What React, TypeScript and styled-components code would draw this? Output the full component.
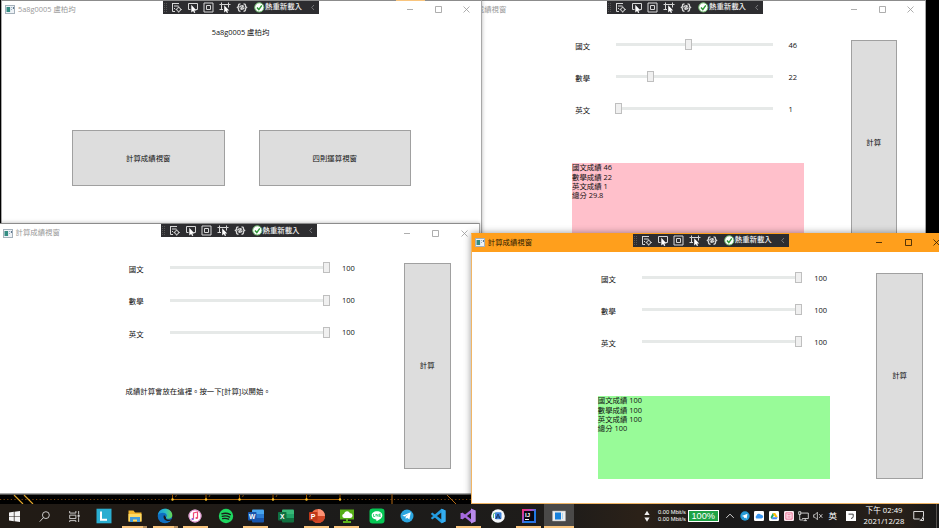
import React from "react";
import styled, { createGlobalStyle, css } from "styled-components";

const GlobalStyle = createGlobalStyle`
  * { box-sizing: border-box; }
  body { margin: 0; overflow: hidden; }
`;

const Desktop = styled.div`
  width: 939px;
  height: 528px;
  display: grid;
  grid-template-rows: 504px 24px;
  overflow: hidden;
  background: #000;
  color: #111;
  font: 7.4px/9.3px "Open Sans", "Noto Sans CJK TC", sans-serif;
  white-space: nowrap;
`;

const Workspace = styled.div`
  position: relative;
  overflow: hidden;
`;

const Wallpaper = styled.svg`
  position: absolute;
  left: 0;
  top: 494px;
  display: block;
`;

const Frame = styled.section<{ $x: number; $y: number; $active?: boolean }>`
  position: absolute;
  left: ${(p) => p.$x}px;
  top: ${(p) => p.$y}px;
  width: 481px;
  height: 271px;
  display: flex;
  flex-direction: column;
  background: #fff;
  border: 1px solid ${(p) => (p.$active ? "#f0b565" : "#a8a8a8")};
  border-top-color: ${(p) => (p.$active ? "#ff9f1c" : "#8c8c8c")};
  box-shadow: 0 0 ${(p) => (p.$active ? "7px rgba(0,0,0,.42)" : "4px rgba(0,0,0,.3)")};
`;

const TitleBar = styled.header<{ $active?: boolean }>`
  position: relative;
  flex: none;
  height: 17.5px;
  display: flex;
  align-items: center;
  padding-left: 3px;
  background: ${(p) => (p.$active ? "#ff9f1c" : "#fff")};
  color: ${(p) => (p.$active ? "#2b1a02" : "#999")};
`;

const Title = styled.span`
  margin-left: 3px;
  flex: 1;
`;

const WindowButtons = styled.div`
  display: flex;
`;

const WindowButton = styled.span`
  width: 28.4px;
  height: 17px;
  display: flex;
  align-items: center;
  justify-content: center;
`;

const DebugBar = styled.div`
  position: absolute;
  left: 161px;
  top: 0;
  width: 156px;
  height: 12.5px;
  display: flex;
  align-items: center;
  background: #2d2d30;
  color: #f3f3f3;
  font-weight: 500;
`;

const FormBody = styled.div`
  flex: 1;
  display: grid;
  grid-template-columns: 126px 232px 46.5px 46.5px;
`;

const FormColumn = styled.div`
  grid-column: 2;
  display: flex;
  flex-direction: column;
  padding-top: 10px;
`;

const SliderRow = styled.div`
  height: 32.2px;
  display: grid;
  grid-template-columns: 44px 160px 1fr;
  align-items: center;
`;

const FieldLabel = styled.label`
  padding: 4px 0 0 3.3px;
`;

const Rail = styled.div`
  display: flex;
  align-items: center;
  height: 11px;
  background: linear-gradient(#e6e9e8, #e6e9e8) 0 4px / 157px 3px no-repeat;
`;

const Thumb = styled.i`
  width: 7px;
  height: 11px;
  background: #f0f0f0;
  border: 1px solid #bfbfbf;
`;

const FieldValue = styled.output`
  padding: 1.5px 0 0 12.5px;
  font-size: 7.5px;
`;

const Result = styled.div<{ $color: string }>`
  margin-top: 38.2px;
  height: 82.5px;
  background: ${(p) => p.$color};
  line-height: 9.3px;
`;

const buttonLook = css`
  display: flex;
  align-items: center;
  justify-content: center;
  padding: 0;
  background: #ddd;
  border: 1px solid #a0a0a0;
  color: #111;
  font: inherit;
`;

const ComputeButton = styled.button`
  ${buttonLook}
  grid-column: 4;
  margin-top: 21px;
  height: 206px;
`;

const MenuBody = styled.div`
  display: flex;
  flex-direction: column;
  align-items: center;
  padding-top: 9.5px;
`;

const Caption = styled.span`
  padding-right: 2px;
`;

const MenuButtons = styled.div`
  display: flex;
  gap: 34px;
  margin-top: 93px;
`;

const MenuButton = styled.button`
  ${buttonLook}
  width: 152.5px;
  height: 56px;
`;

const TopAccent = styled.i`
  position: absolute;
  left: 396px;
  top: 0;
  width: 29px;
  height: 1px;
  background: #f9c57e;
`;

const Taskbar = styled.footer`
  display: flex;
  align-items: stretch;
  background: linear-gradient(90deg, #211b15 0, #211b16 20%, #1c1b1a 32%, #1e1c1a 60%, #2b2118 68%, #1a1a1a 76%, #1c1a19 88%, #2a2119 95%, #181818 100%);
  color: #fff;
`;

const Task = styled.div<{ $w?: number; $open?: boolean; $stacked?: boolean; $current?: boolean }>`
  flex: none;
  width: ${(p) => p.$w ?? 30.3}px;
  display: flex;
  align-items: center;
  justify-content: center;
  background:
    ${(p) =>
      p.$open
        ? p.$stacked
          ? "linear-gradient(90deg,#f9c57e 21px,#b38e60 21px) 50% 100% / 25px 2px no-repeat"
          : `linear-gradient(#f9c57e,#f9c57e) 50% 100% / ${p.$current ? 30 : 25}px 2px no-repeat`
        : "none"}
    ${(p) => (p.$current ? ", #4a4948" : "")};
`;

const Tray = styled.div`
  margin-left: auto;
  display: flex;
  align-items: center;
  justify-content: flex-end;
`;

const Traffic = styled.div`
  display: flex;
  flex-direction: column;
  width: 30px;
  font: 5.7px/6.6px "Liberation Sans", Arial, sans-serif;
`;

const Battery = styled.div`
  width: 30.5px;
  height: 12px;
  margin-right: 4px;
  display: flex;
  align-items: center;
  justify-content: center;
  border: 1px solid #fff;
  background: #1da345;
  font: 9.2px/10px "Liberation Sans", Arial, sans-serif;
`;

const TrayCell = styled.span<{ $w?: number }>`
  width: ${(p) => p.$w ?? 14.7}px;
  display: flex;
  align-items: center;
  justify-content: center;
  font-size: 8.5px;
`;

const Clock = styled.div`
  width: 46px;
  text-align: center;
  font-size: 7.7px;
  line-height: 11px;
`;

const ShowDesktop = styled.i`
  width: 3px;
  height: 24px;
  margin-left: 5px;
  border-left: 1px solid #55514e;
`;

const AppIcon = () => (
  <svg width="10" height="9" viewBox="0 0 10 9">
    <rect x=".5" y=".5" width="9" height="8" fill="#eef2f6" stroke="#a4b0ba" />
    <rect x="1.5" y="2" width="3.6" height="5" fill="#338c82" />
    <path d="M6 2.5h1M6 4.5h1" stroke="#9db2c9" />
    <path d="M8.4 2v2" stroke="#4d6b86" />
  </svg>
);

const DebugIcons = () => (
  <svg width="156" height="13" viewBox="0 0 156 13" fill="none" stroke="#d8d8d8" strokeWidth="1">
    <path d="M1.5 2v10M3.5 2v10" stroke="#555" strokeDasharray="1 1" />
    <path d="M9 2.5h7M9.5 2.5v8H12M11 5h4.500M11 7.5h1" />
    <circle cx="15.700" cy="8.500" r="1.900" />
    <path d="M15.700 5.400v1.200M15.700 10.400v1.200M12.600 8.500h1.200M17.600 8.500h1.200" />
    <path d="M27.500 8.500h-2v-6h9v6h-2" />
    <path d="M28.300 3.800v7.800l1.800-1.600 1 2 1.200-.5-1-2.100h2.200Z" fill="#fff" stroke="none" />
    <path d="M41 2h9v9h-9ZM43.500 4.500h4v4h-4Z" />
    <path d="M58.500 3.500h7M58.500 3.500v5.500M65.500 3.500v3M56.500 3.500h2M56.500 8.500h3.500M65.500 3.500h2M58.500 1.500v2M65.500 1.500v2" />
    <path d="M61.200 4.300v7.300l1.700-1.500 1 2 1.200-.5-1-2h2.100Z" fill="#fff" stroke="none" />
    <path d="M77.500 2.800q-2 0-2 1.700v1l-1.100.9 1.100 1v1.200q0 1.700 2 1.700M80.500 2.800q2 0 2 1.700v1l1.100.9-1.100 1v1.200q0 1.700-2 1.700M76.500 6.500q.8-2 3.800-1.800M81.300 6.500q-.8 2-3.800 1.800M77.500 8l3.200-3.200" strokeWidth="1.300" />
    <circle cx="96.300" cy="6.400" r="4.600" fill="#fff" stroke="#6dbb6d" />
    <path d="m94 6.600 1.800 2 3-4.200" stroke="#2e9a38" strokeWidth="1.500" />
    <path d="m151 4-2.300 2.500L151 9" stroke="#77777a" />
  </svg>
);

const DebugContent = styled.div`
  display: grid;
  > * { grid-area: 1 / 1; }
  > span { padding: 1.5px 0 0 102px; }
`;

const DebugToolbar = () => (
  <DebugBar>
    <DebugContent>
      <DebugIcons />
      <span>熱重新載入</span>
    </DebugContent>
  </DebugBar>
);

type WindowProps = { x: number; y: number; title: string; active?: boolean; children: React.ReactNode };

const AppWindow = ({ x, y, title, active, children }: WindowProps) => (
  <Frame $x={x} $y={y} $active={active}>
    <TitleBar $active={active}>
      <AppIcon />
      <Title>{title}</Title>
      <WindowButtons>
        {["M0 3.5h6", "M.5.5h6v6h-6Z", "m.5.5 6 6m0-6-6 6"].map((d) => (
          <WindowButton key={d}>
            <svg width="7" height="7" viewBox="0 0 7 7" fill="none" stroke={active ? "#2b1a02" : "#999"} strokeWidth=".8">
              <path d={d} />
            </svg>
          </WindowButton>
        ))}
      </WindowButtons>
      <DebugToolbar />
    </TitleBar>
    {children}
  </Frame>
);

type GradeProps = { scores: [number, number, number]; color?: string; lines: string[] };

const GradeForm = ({ scores, color = "transparent", lines }: GradeProps) => (
  <FormBody>
    <FormColumn>
      {["國文", "數學", "英文"].map((name, i) => (
        <SliderRow key={name}>
          <FieldLabel>{name}</FieldLabel>
          <Rail>
            <Thumb style={{ marginLeft: -3 + scores[i] * 1.565 }} />
          </Rail>
          <FieldValue>{scores[i]}</FieldValue>
        </SliderRow>
      ))}
      <Result $color={color}>
        {lines.map((line) => (
          <div key={line}>{line}</div>
        ))}
      </Result>
    </FormColumn>
    <ComputeButton>計算</ComputeButton>
  </FormBody>
);

const WallpaperTrace = () => (
  <Wallpaper width="939" height="10" viewBox="0 0 939 10" fill="none">
    <path d="M0 .5h480" stroke="#606060" />
    <path d="M0 5.5h173M340 5.5H480" stroke="#7d450c" strokeDasharray="1.2 2.4" />
    <path d="M172 5.5h168" stroke="#ae650a" />
    {[172.5, 206, 239.5, 273, 306.5, 340].map((x) => (
      <g key={x}>
        <path d={`M${x} 0v5`} stroke="#9b5709" />
        <circle cx={x} cy="5.5" r="1.2" fill="#ffc226" />
        {x < 340 && <path d={`M${x + 3} 3l1-2`} stroke="#9b5709" strokeWidth=".8" />}
      </g>
    ))}
    <path d="m14 1 9 9M24 1l9 9" stroke="#e2a62b" strokeWidth="1.2" />
    <path d="M392 0v10m55-9 9 9" stroke="#b56b17" />
  </Wallpaper>
);

const Glyph = ({ children, size = 16 }: { children: React.ReactNode; size?: number }) => (
  <svg width={size} height={size} viewBox="0 0 16 16" fill="none">
    {children}
  </svg>
);

const letterStyle = { fontFamily: "Liberation Sans", fontWeight: 700 };

const OfficeIcon = ({ letter, base, mid, dark }: { letter: string; base: string; mid: string; dark: string }) => (
  <Glyph>
    <path d="M5 1.5h10a1 1 0 0 1 1 1V6H4V2.5a1 1 0 0 1 1-1Z" fill={base} />
    <path d="M4 6h12v4H4Z" fill={mid} />
    <path d="M4 10h12v3.5a1 1 0 0 1-1 1H5a1 1 0 0 1-1-1Z" fill={dark} />
    <rect x="0" y="4" width="8.5" height="8.5" rx=".7" fill={dark} />
    <text x="4.2" y="10.6" fontSize="6.7" fill="#fff" textAnchor="middle" style={letterStyle}>{letter}</text>
  </Glyph>
);

const tasks: { icon: React.ReactNode; open?: boolean; stacked?: boolean; current?: boolean }[] = [
  { icon: <Glyph><path d="M.5.7h15v14.6H.5Z" fill="#2aaed1" /><path d="M5 3.5v8.3h6" stroke="#fff" strokeWidth="2" /></Glyph> },
  { open: true, stacked: true, icon: <Glyph><path d="M1.5 2.5h5l1.5 2h6.5v9h-13Z" fill="#f4b52c" /><path d="M1.5 6h13v7.5h-13Z" fill="#ffda65" /><path d="M3 9h10v5H10v-2.5H6V14H3Z" fill="#429bdc" /></Glyph> },
  { open: true, stacked: true, icon: <Glyph>
    <defs><linearGradient id="edgeTop"><stop stopColor="#1798dc" /><stop offset=".55" stopColor="#2dbdc3" /><stop offset="1" stopColor="#68d84b" /></linearGradient></defs>
    <circle cx="8" cy="8" r="7.3" fill="#0f6fc1" />
    <path d="M.8 7C1.5 3 4.5.7 8 .7c4 0 7.3 3 7.3 6.3 0 2.5-1.7 3.8-3.8 3.8-1.5 0-2.500-.5-2.500-1 0-.6.8-.8.8-2C9.800 6 8 4.800 5.800 4.800 3.400 4.800 1.500 6 .8 7Z" fill="url(#edgeTop)" />
    <path d="M7 7c-1.500 3.300 1 6 4.500 6q2 0 3-1.200l1 .2v-1q-2 1-4 .8c-2 0-3-1-2.500-2.500Z" fill="#1c1b1a" />
  </Glyph> },
  { open: true, icon: <Glyph><circle cx="8" cy="8" r="6.5" fill="#fff" /><circle cx="8" cy="8" r="6" stroke="#d56abd" strokeWidth=".8" /><path d="M6.5 10.8V5l4-1v6" stroke="#ef4876" strokeWidth="1.2" /><ellipse cx="5.7" cy="11" rx="1.3" ry="1" fill="#8a5ed0" /><ellipse cx="9.7" cy="10" rx="1.3" ry="1" fill="#f1486b" /></Glyph> },
  { icon: <Glyph><circle cx="8" cy="8" r="7.2" fill="#1ed760" /><path d="M3.8 5.8q4.5-1.4 8.6.8M4.2 8.3q4-1.1 7.4.8M4.6 10.6q3.2-.8 6 .6" stroke="#1c1b1a" strokeWidth="1.3" strokeLinecap="round" /></Glyph> },
  { open: true, icon: <OfficeIcon letter="W" base="#48a5ee" mid="#2b7cd3" dark="#1855ac" /> },
  { icon: <OfficeIcon letter="X" base="#38b978" mid="#21a366" dark="#107040" /> },
  { open: true, icon: <Glyph><circle cx="9" cy="8" r="7" fill="#ed6c47" /><path d="M9 1a7 7 0 0 1 7 7H9Z" fill="#ff9275" /><path d="M4 12.9A7 7 0 0 0 16 8H4Z" fill="#d24726" /><rect x="0" y="4" width="8.5" height="8.5" rx=".7" fill="#bf3719" /><text x="4.2" y="10.6" fontSize="7" fill="#fff" textAnchor="middle" style={letterStyle}>P</text></Glyph> },
  { open: true, icon: <Glyph><rect x="1" y="1.5" width="14" height="10" fill="#56ae16" /><path d="M7 11h2v2h3v2H4v-2h3Z" fill="#5fb51c" /><path d="M5 10a2.200 2.200 0 0 1 0-4.300 3.200 3.200 0 0 1 6-.5 2.400 2.400 0 0 1 .3 4.800Z" fill="#fff" /></Glyph> },
  { icon: <Glyph><rect x=".5" y=".5" width="15" height="15" rx="3" fill="#06c755" /><path d="M8 3.2c-3.2 0-5.3 1.8-5.3 4.2 0 2.1 1.8 3.7 4.4 4 .6.1.3 1 .3 1.8 2.5-1.3 5.9-3.2 5.9-5.8C13.3 5 11.2 3.2 8 3.2Z" fill="#fff" /><path d="M4.5 6v2.5H6M7 8.5V6l2 2.5V6M11.8 6h-1.5v2.5h1.5M10.3 7.2h1.5" stroke="#06c755" strokeWidth=".7" /></Glyph> },
  { icon: <Glyph><circle cx="8" cy="8" r="6.5" fill="#2ba5df" /><path d="m3.3 7.8 8.5-3.5-1.4 7.3-2.3-1.8-1.3 1.2-.3-2.2 3.2-2.8-4 2.5Z" fill="#fff" /></Glyph> },
  { icon: <Glyph><path d="m11.5.7 4 1.7v11.2l-4 1.7L.8 6 2.3 4.5l9.2 7V4.5l-9.2 7L.8 10Z" fill="#249de2" /><path d="m11.5.7 4 1.7v11.2l-4 1.7Z" fill="#34adf0" /></Glyph> },
  { open: true, icon: <Glyph><path d="M1.700 5v6M1.700 5.300 12 13.500M1.700 10.700 12 2.500" stroke="#a66bdf" strokeWidth="2.300" /><path d="m11 .5 4.700 2v11l-4.700 2Z" fill="#b98aea" /></Glyph> },
  { icon: <Glyph><circle cx="8" cy="8" r="6.8" fill="#f5f8fa" /><rect x="5" y="4.3" width="6.500" height="7" rx="1.2" fill="#3c82dc" /><path d="m5.8 11 2.2-5 2.3 5M6.5 9h3" stroke="#173864" /><path d="M3.5 10V5.8l2-1" stroke="#54b77e" /></Glyph> },
  { open: true, icon: <Glyph><defs><linearGradient id="ij" x2="1" y2="1"><stop stopColor="#fc276b" /><stop offset=".35" stopColor="#b44cc0" /><stop offset=".6" stopColor="#147ee8" /><stop offset="1" stopColor="#366ddd" /></linearGradient></defs><path d="M1 1h14v14H1Z" fill="url(#ij)" /><path d="M3 3h10v10H3Z" fill="#080813" /><text x="4" y="8.5" fontSize="6" fill="#fff" style={letterStyle}>IJ</text><path d="M4 11.5h4" stroke="#fff" /></Glyph> },
  { open: true, current: true, icon: <Glyph><path d="M1.5 3h13v10h-13Z" fill="#ededed" stroke="#aaa" strokeWidth=".5" /><path d="M4 4.5h6v7H4Z" fill="#1780db" /><path d="M11.5 5v6" stroke="#a8d5f2" /></Glyph> },
];

const SystemIcons = () => (
  <>
    <Task $w={29}><Glyph size={11}><path d="M0 2.2 7 1.2v6.3H0ZM8 1l8-1v7.5H8ZM0 8.5h7v6.3l-7-1ZM8 8.5h8V16l-8-1.1Z" fill="#f3f3f3" /></Glyph></Task>
    <Task $w={30}><Glyph size={11}><circle cx="10" cy="6" r="5" stroke="#ddd" strokeWidth="1.3" /><path d="M6.5 9.5 1 15.5" stroke="#ddd" strokeWidth="1.3" /></Glyph></Task>
    <Task $w={30.3}><Glyph size={11}><path d="M1 0v3h9V0M1 6h9v5H1ZM1 16v-2h9v2M14 0v5M14 9v7" stroke="#ddd" strokeWidth="1.3" /><path d="M12.5 5.5h3v3h-3Z" fill="#ddd" /></Glyph></Task>
  </>
);

const SystemTray = () => (
  <Tray>
    <TrayCell $w={22}><Glyph size={12}><path d="M8 1 11.5 6.500H4.500ZM8 15.500l3.500-5.500H4.500Z" fill="#eee" /></Glyph></TrayCell>
    <Traffic><span>0.00 Mbit/s</span><span>0.00 Mbit/s</span></Traffic>
    <Battery>100%</Battery>
    <TrayCell><Glyph size={10}><path d="m2 11 6-6 6 6" stroke="#eee" strokeWidth="1.4" /></Glyph></TrayCell>
    <TrayCell><Glyph size={10}><circle cx="8" cy="8" r="7.5" fill="#269bd6" /><path d="m3 8 9-3.8-1.5 8-2.5-2-1.5 1.3-.2-2.5Z" fill="#fff" /></Glyph></TrayCell>
    <TrayCell><Glyph size={10}><rect width="16" height="16" rx="2" fill="#fff" /><path d="M4 12a3 3 0 0 1 0-5 4 4 0 0 1 7-1 3 3 0 0 1 1 6Z" fill="#3895f0" /></Glyph></TrayCell>
    <TrayCell><Glyph size={10}><rect width="16" height="16" rx="2" fill="#fff" /><path d="m6 3 2 3.5L4.5 13l-2-3Z" fill="#1ba260" /><path d="M6 3h4l4 7h-4Z" fill="#fbbc05" /><path d="M6 10h8l-2 3H4.5Z" fill="#4285f4" /></Glyph></TrayCell>
    <TrayCell><Glyph size={10}><rect width="16" height="16" rx="2" fill="#fbe9ef" /><path d="M3 3h10v10H3ZM5.5 6h5M5.500 9.500h5" stroke="#ec6c92" strokeWidth="1.5" /></Glyph></TrayCell>
    <TrayCell><Glyph size={11}><path d="M4 3h11v8H6M1 1h3v4H1ZM2.5 5v8h5M8 14h5M10.5 11v3" stroke="#eee" strokeWidth="1.2" /></Glyph></TrayCell>
    <TrayCell><Glyph size={10}><path d="M1 6h2l4-4v12l-4-4H1ZM10 5l5 6M15 5l-5 6" stroke="#ddd" strokeWidth="1.3" /></Glyph></TrayCell>
    <TrayCell>英</TrayCell>
    <TrayCell $w={21}><Glyph size={10}><rect width="16" height="16" fill="#fff" /><path d="M4 5h7.500v4q0 2.500-3.500 3" stroke="#333" strokeWidth="1.5" /></Glyph></TrayCell>
    <Clock>下午 02:49<br />2021/12/28</Clock>
    <TrayCell $w={24}><Glyph size={12}><path d="M9 12H1V2h13v6" stroke="#eee" strokeWidth="1.2" /><path d="M14 8q-1 5-5 6M14 10v4h-4" stroke="#eee" strokeWidth="1.2" /></Glyph></TrayCell>
    <ShowDesktop />
  </Tray>
);

export default function App() {
  return (
    <>
      <GlobalStyle />
      <Desktop lang="zh-Hant">
        <Workspace>
          <WallpaperTrace />
          <AppWindow x={445} y={0} title="計算成績視窗">
            <GradeForm scores={[46, 22, 1]} color="#ffc0cb" lines={["國文成績 46", "數學成績 22", "英文成績 1", "總分 29.8"]} />
          </AppWindow>
          <AppWindow x={1} y={0} title="5a8g0005 盧柏均">
            <MenuBody>
              <Caption>5a8g0005 盧柏均</Caption>
              <MenuButtons>
                <MenuButton>計算成績視窗</MenuButton>
                <MenuButton>四則運算視窗</MenuButton>
              </MenuButtons>
            </MenuBody>
          </AppWindow>
          <AppWindow x={-1.5} y={223.3} title="計算成績視窗">
            <GradeForm scores={[100, 100, 100]} lines={["成績計算會放在這裡。按一下[計算]以開始。"]} />
          </AppWindow>
          <AppWindow x={470.8} y={233} title="計算成績視窗" active>
            <GradeForm scores={[100, 100, 100]} color="#98fb98" lines={["國文成績 100", "數學成績 100", "英文成績 100", "總分 100"]} />
          </AppWindow>
          <TopAccent />
        </Workspace>
        <Taskbar>
          <SystemIcons />
          {tasks.map((t, i) => (
            <Task key={i} $open={t.open} $stacked={t.stacked} $current={t.current}>
              {t.icon}
            </Task>
          ))}
          <SystemTray />
        </Taskbar>
      </Desktop>
    </>
  );
}
